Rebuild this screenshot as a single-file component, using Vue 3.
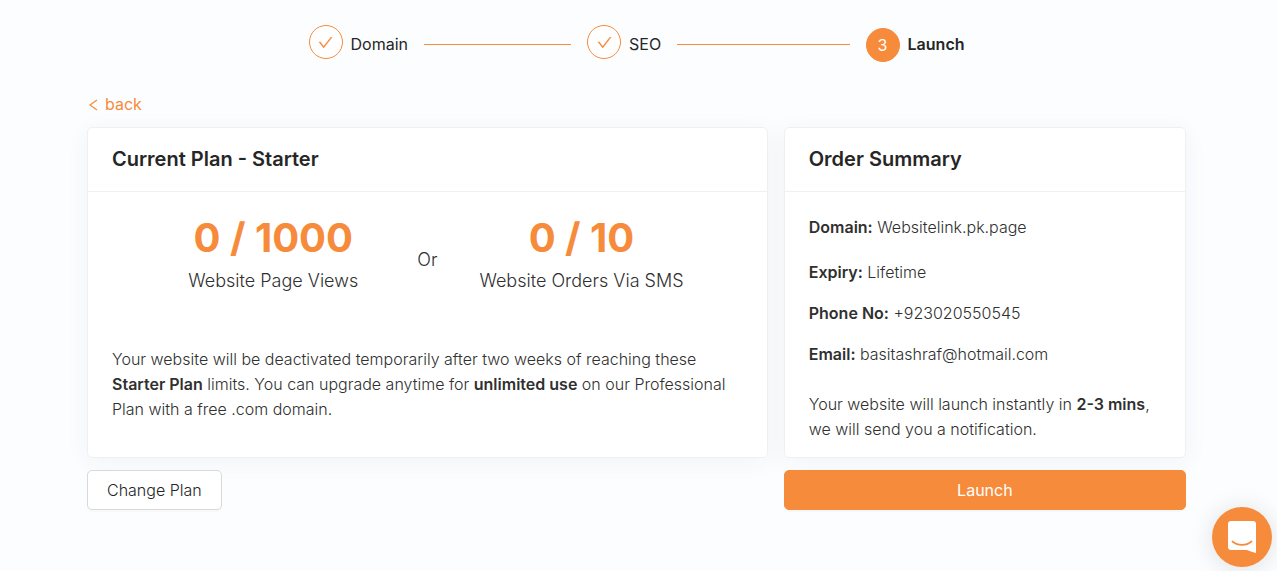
<script setup>
const steps = [
  { number: 1, title: 'Domain', done: true },
  { number: 2, title: 'SEO', done: true },
  { number: 3, title: 'Launch', done: false },
]

const usage = [
  { value: '0 / 1000', label: 'Website Page Views' },
  { value: '0 / 10', label: 'Website Orders Via SMS' },
]

const order = [
  { label: 'Domain:', value: 'Websitelink.pk.page' },
  { label: 'Expiry:', value: 'Lifetime' },
  { label: 'Phone No:', value: '+923020550545' },
  { label: 'Email:', value: 'basitashraf@hotmail.com' },
]
</script>

<template>
  <main class="page">
    <ol class="steps">
      <li v-for="step in steps" :key="step.number" class="step" :class="{ done: step.done }">
        <span class="step-icon">
          <svg v-if="step.done" viewBox="64 64 896 896" width="15" height="15" aria-hidden="true">
            <path
              fill="currentColor"
              d="M912 190h-69.900c-9.800 0-19.100 4.500-25.100 12.200L404.700 724.500 207 474a32 32 0 0 0-25.100-12.200H112c-6.700 0-10.400 7.700-6.300 12.900l273.900 347c12.800 16.200 37.400 16.200 50.300 0l488.400-618.900c4.100-5.100.4-12.800-6.300-12.800z"
            />
          </svg>
          <template v-else>{{ step.number }}</template>
        </span>
        <span class="step-title">{{ step.title }}</span>
      </li>
    </ol>

    <a class="back" href="#">
      <svg viewBox="0 0 14 14" width="14" height="14" aria-hidden="true">
        <path d="M10 2 3 7l7 5" fill="none" stroke="currentColor" stroke-width="1.200" />
      </svg>
      back
    </a>

    <div class="columns">
      <section class="card">
        <h2 class="card-title">Current Plan - Starter</h2>
        <div class="card-body">
          <div class="usage">
            <div class="metric">
              <strong class="metric-value">{{ usage[0].value }}</strong>
              <span>{{ usage[0].label }}</span>
            </div>
            <span class="or">Or</span>
            <div class="metric">
              <strong class="metric-value">{{ usage[1].value }}</strong>
              <span>{{ usage[1].label }}</span>
            </div>
          </div>
          <p class="note">
            Your website will be deactivated temporarily after two weeks of reaching these
            <strong>Starter Plan</strong> limits. You can upgrade anytime for
            <strong>unlimited use</strong> on our Professional Plan with a free .com domain.
          </p>
        </div>
      </section>

      <section class="card">
        <h2 class="card-title">Order Summary</h2>
        <div class="card-body summary">
          <p v-for="row in order" :key="row.label" class="row">
            <strong>{{ row.label }}</strong> {{ row.value }}
          </p>
          <p class="note">
            Your website will launch instantly in <strong>2-3 mins</strong>, we will send you a
            notification.
          </p>
        </div>
      </section>

      <div>
        <button type="button" class="button">Change Plan</button>
      </div>
      <button type="button" class="button primary">Launch</button>
    </div>

    <button type="button" class="chat" aria-label="Open chat">
      <svg viewBox="0 0 28 32" width="28" height="32" aria-hidden="true">
        <path
          fill="#fff"
          d="M3 0h22a3 3 0 0 1 3 3v29c-3-.6-6-1.800-9-3H3a3 3 0 0 1-3-3V3a3 3 0 0 1 3-3z"
        />
        <path
          d="M4.500 20.500c5.500 4.500 13.500 4.500 19 0"
          fill="none"
          stroke="#f68b3c"
          stroke-width="1.800"
          stroke-linecap="round"
        />
      </svg>
    </button>
  </main>
</template>

<style>
body {
  margin: 0;
  background: #fcfdff;
}
</style>

<style scoped>
.page {
  padding: 25px 91px 60px 87px;
  font-family: Inter, "Liberation Sans", sans-serif;
  font-size: 16px;
  font-weight: 300;
  line-height: 25px;
  color: #262626;
}

.steps {
  display: flex;
  gap: 16px;
  max-width: 656px;
  margin: 0 auto;
  padding: 0;
  list-style: none;
}

.step {
  display: flex;
  flex: 1;
  align-items: flex-start;
}

.step:last-child {
  flex: none;
}

.step.done::after {
  content: "";
  flex: 1;
  height: 1px;
  margin: 19px 0 0 16px;
  background: #f68b3c;
}

.step-icon {
  display: flex;
  align-items: center;
  justify-content: center;
  box-sizing: border-box;
  width: 34px;
  height: 34px;
  margin-top: 3px;
  margin-right: 8px;
  border: 1px solid #f68b3c;
  border-radius: 50%;
  background: #f68b3c;
  color: #fff;
  font-weight: 400;
}

.done .step-icon {
  margin-top: 0;
  background: #fff;
  color: #f68b3c;
}

.step-title {
  margin-top: 7px;
  font-weight: 600;
}

.done .step-title {
  font-weight: 400;
}

.back {
  display: flex;
  align-items: center;
  gap: 4px;
  width: fit-content;
  margin-top: 30px;
  color: #f68b3c;
  font-weight: 400;
  text-decoration: none;
}

.columns {
  display: grid;
  grid-template-columns: 22fr 13fr;
  gap: 12px 16px;
  margin-top: 10px;
}

.card {
  border: 1px solid #f0f0f0;
  border-radius: 5px;
  background: #fff;
  box-shadow: 0 4px 24px rgba(30, 50, 80, 0.05);
}

.card-title {
  margin: 0;
  padding: 16px 24px;
  border-bottom: 1px solid #f0f0f0;
  font-size: 20px;
  font-weight: 600;
  line-height: 31px;
}

.card-body {
  padding: 24px;
  color: #303030;
}

.usage {
  display: grid;
  grid-template-columns: 1fr auto 1fr;
  align-items: center;
  gap: 42px;
  width: fit-content;
  margin: 0 auto 52px;
  font-size: 18px;
  line-height: 28px;
}

.metric {
  display: flex;
  flex-direction: column;
  align-items: center;
  gap: 8px;
  white-space: nowrap;
}

.metric-value {
  font-size: 40px;
  font-weight: 700;
  line-height: 43px;
  color: #f68b3c;
}

.or {
  margin-top: 9px;
}

.note {
  margin: 0;
}

.row {
  margin: 0 0 16px;
}

.row:first-child {
  margin-bottom: 20px;
}

.summary .note {
  margin-top: 25px;
}

.summary {
  padding-top: 23px;
  padding-bottom: 15px;
}

strong {
  font-weight: 600;
}

.button {
  box-sizing: border-box;
  height: 40px;
  padding: 0 19px;
  border: 1px solid #d9d9d9;
  border-radius: 5px;
  background: #fff;
  box-shadow: 0 2px 0 rgba(0, 0, 0, 0.02);
  color: #262626;
  font: inherit;
}

.primary {
  border-color: #f68b3c;
  background: #f68b3c;
  color: #fff;
  font-weight: 400;
}

.chat {
  position: fixed;
  right: 5px;
  bottom: 4px;
  display: flex;
  align-items: center;
  justify-content: center;
  width: 60px;
  height: 60px;
  padding: 0;
  border: 0;
  border-radius: 50%;
  background: #f68b3c;
  box-shadow: 0 2px 24px rgba(0, 0, 0, 0.12);
}
</style>
